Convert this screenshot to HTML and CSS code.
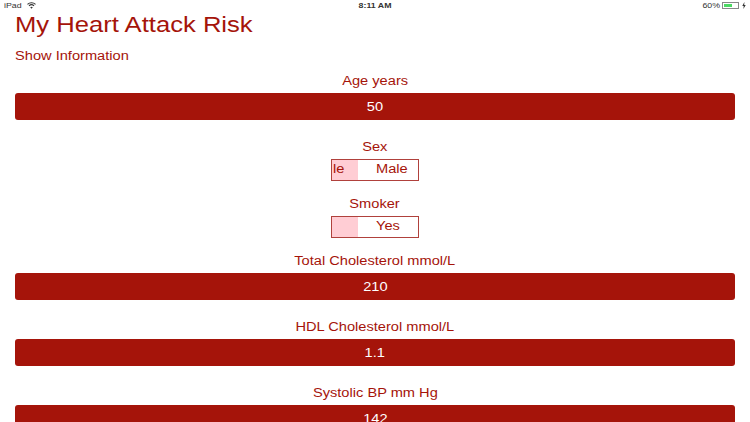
FILE: index.html
```
<!DOCTYPE html>
<html lang="en">
<head>
    <meta charset="UTF-8" />
    <title>My Heart Attack Risk</title>
    <link rel="stylesheet" href="styles.css">
</head>
<body>
    <div class="statusbar">
        <div class="status-left">
            <span class="wide">iPad</span>
            <svg class="wifi" width="9" height="7" viewBox="0 0 9 7">
                <path d="M0.5 2.4 A5.8 5.8 0 0 1 8.5 2.4" fill="none" stroke="#333" stroke-width="1.1" />
                <path d="M2 3.9 A3.6 3.6 0 0 1 7 3.9" fill="none" stroke="#333" stroke-width="1.1" />
                <path d="M4.5 6.8 L3.2 5.3 A1.9 1.9 0 0 1 5.8 5.3 Z" fill="#333" />
            </svg>
        </div>
        <div class="status-time"><span class="wide mid">8:11 AM</span></div>
        <div class="status-right">
            <span class="wide right">60%</span>
            <span class="battery"><span class="battery-level"></span></span>
            <svg width="4" height="7" viewBox="0 0 4 7">
                <path d="M2.4 0 L0.3 3.9 H1.7 L1.4 7 L3.7 3 H2.2 Z" fill="#333" />
            </svg>
        </div>
    </div>

    <h1><span class="wide">My Heart Attack Risk</span></h1>
    <a class="info-link"><span class="wide">Show Information</span></a>

    <div class="field first">
        <label><span class="wide mid">Age years</span></label>
        <div class="value-bar"><span class="wide mid">50</span></div>
    </div>

    <div class="field toggle-field">
        <label><span class="wide mid">Sex</span></label>
        <div class="toggle">
            <div class="toggle-off"><span class="wide">le</span></div>
            <div class="toggle-on"><span class="wide">Male</span></div>
        </div>
    </div>

    <div class="field toggle-field">
        <label><span class="wide mid">Smoker</span></label>
        <div class="toggle">
            <div class="toggle-off"></div>
            <div class="toggle-on"><span class="wide">Yes</span></div>
        </div>
    </div>

    <div class="field">
        <label><span class="wide mid">Total Cholesterol mmol/L</span></label>
        <div class="value-bar"><span class="wide mid">210</span></div>
    </div>

    <div class="field">
        <label><span class="wide mid">HDL Cholesterol mmol/L</span></label>
        <div class="value-bar"><span class="wide mid">1.1</span></div>
    </div>

    <div class="field">
        <label><span class="wide mid">Systolic BP mm Hg</span></label>
        <div class="value-bar"><span class="wide mid">142</span></div>
    </div>
</body>
</html>
```

FILE: styles.css
```
html, body {
    height: 422px;
    overflow: hidden;
}

body {
    font-family: 'Liberation Sans', Arial, sans-serif;
    background-color: white;
    color: #a5140a;
    margin: 0;
    padding: 0 15px;
}

/* the screenshot is stretched sideways, so the text is too */
.wide {
    display: inline-block;
    transform: scaleX(1.17);
    transform-origin: left center;
}

.wide.mid {
    transform-origin: center;
}

.wide.right {
    transform-origin: right center;
}

.statusbar {
    display: grid;
    grid-template-columns: 1fr auto 1fr;
    align-items: center;
    height: 11px;
    margin: 0 -11px 0 -11px;
    font-size: 7.5px;
    color: #333;
}

.status-left {
    display: flex;
    align-items: center;
    gap: 8px;
}

.status-time {
    font-weight: bold;
}

.status-right {
    display: flex;
    justify-content: flex-end;
    align-items: center;
    gap: 2px;
}

.battery {
    display: block;
    width: 17px;
    height: 7px;
    padding: 1px;
    box-sizing: border-box;
    border: 1px solid #888;
    margin-right: 1px;
}

.battery-level {
    display: block;
    width: 65%;
    height: 100%;
    background-color: #4cd964;
}

h1 {
    margin: 0;
    font-size: 21.9px;
    line-height: 27px;
    font-weight: normal;
}

.info-link {
    display: block;
    margin-top: 9px;
    font-size: 12.5px;
    line-height: 18px;
}

.field {
    margin-top: 18px;
    text-align: center;
}

.field.first {
    margin-top: 7px;
}

.toggle-field + .field {
    margin-top: 14px;
}

.field label {
    display: block;
    font-size: 12.5px;
    line-height: 18px;
    margin-bottom: 3px;
}

.value-bar {
    height: 27px;
    line-height: 28px;
    background-color: #a5140a;
    color: white;
    border-radius: 3px;
    font-size: 12.5px;
}

.toggle {
    display: flex;
    width: 88px;
    height: 22px;
    box-sizing: border-box;
    margin: 0 auto;
    border: 1px solid #b0413c;
    font-size: 12.5px;
    line-height: 19px;
}

.toggle-off {
    width: 26px;
    padding-left: 1px;
    box-sizing: border-box;
    background-color: #ffcdd4;
    text-align: left;
}

.toggle-on {
    flex: 1;
    padding-left: 18px;
    text-align: left;
}
```
